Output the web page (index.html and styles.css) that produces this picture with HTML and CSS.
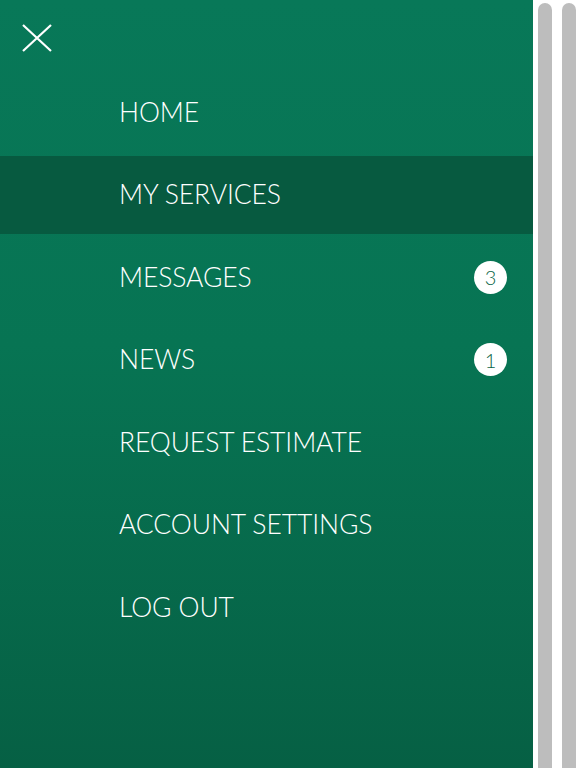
FILE: index.html
```html
<!DOCTYPE html>
<html>
<head>
<meta charset="utf-8">
<link rel="stylesheet" href="styles.css">
</head>
<body>
<div class="screen">
  <nav class="panel">
    <div class="top">
      <svg class="close" width="30" height="28" viewBox="0 0 30 28">
        <path d="M1 1 L29 27 M29 1 L1 27" stroke="#fff" stroke-width="2.2" fill="none"/>
      </svg>
    </div>
    <ul class="menu">
      <li class="item"><span class="label">HOME</span></li>
      <li class="item active"><span class="label">MY SERVICES</span></li>
      <li class="item"><span class="label">MESSAGES</span><span class="badge">3</span></li>
      <li class="item"><span class="label">NEWS</span><span class="badge">1</span></li>
      <li class="item"><span class="label">REQUEST ESTIMATE</span></li>
      <li class="item"><span class="label">ACCOUNT SETTINGS</span></li>
      <li class="item"><span class="label">LOG OUT</span></li>
    </ul>
  </nav>
  <div class="rail">
    <div class="bar"></div>
    <div class="bar"></div>
  </div>
</div>
</body>
</html>
```
FILE: styles.css
```css
html, body {
  margin: 0;
  padding: 0;
  background: #fff;
}
.screen {
  display: flex;
  width: 576px;
  height: 768px;
  overflow: hidden;
}
.panel {
  width: 533px;
  flex: none;
  height: 768px;
  background: linear-gradient(180deg, #087858 0%, #077453 45%, #066044 100%);
  color: #fff;
  font-family: "Lato", "Liberation Sans", sans-serif;
  font-weight: 300;
}
.top {
  height: 73px;
  padding-left: 22px;
  padding-top: 24px;
  box-sizing: border-box;
}
.close {
  display: block;
}
.menu {
  list-style: none;
  margin: 0;
  padding: 0;
  display: flex;
  flex-direction: column;
  gap: 4.5px;
}
.item {
  height: 78px;
  display: flex;
  align-items: center;
  justify-content: space-between;
  padding-left: 119px;
  padding-right: 26px;
}
.item.active {
  background: #075a40;
}
.label {
  font-size: 26.5px;
  letter-spacing: -0.1px;
  line-height: 1;
}
.badge {
  width: 33px;
  height: 33px;
  border-radius: 50%;
  background: #fff;
  color: #0a6548;
  font-size: 20px;
  display: flex;
  align-items: center;
  justify-content: center;
  line-height: 1;
}
.rail {
  flex: 1;
  display: flex;
  gap: 10px;
  padding-left: 5px;
  padding-top: 3px;
}
.bar {
  width: 14px;
  flex: none;
  background: #bdbdbd;
  border-radius: 7px 7px 0 0;
}
```
